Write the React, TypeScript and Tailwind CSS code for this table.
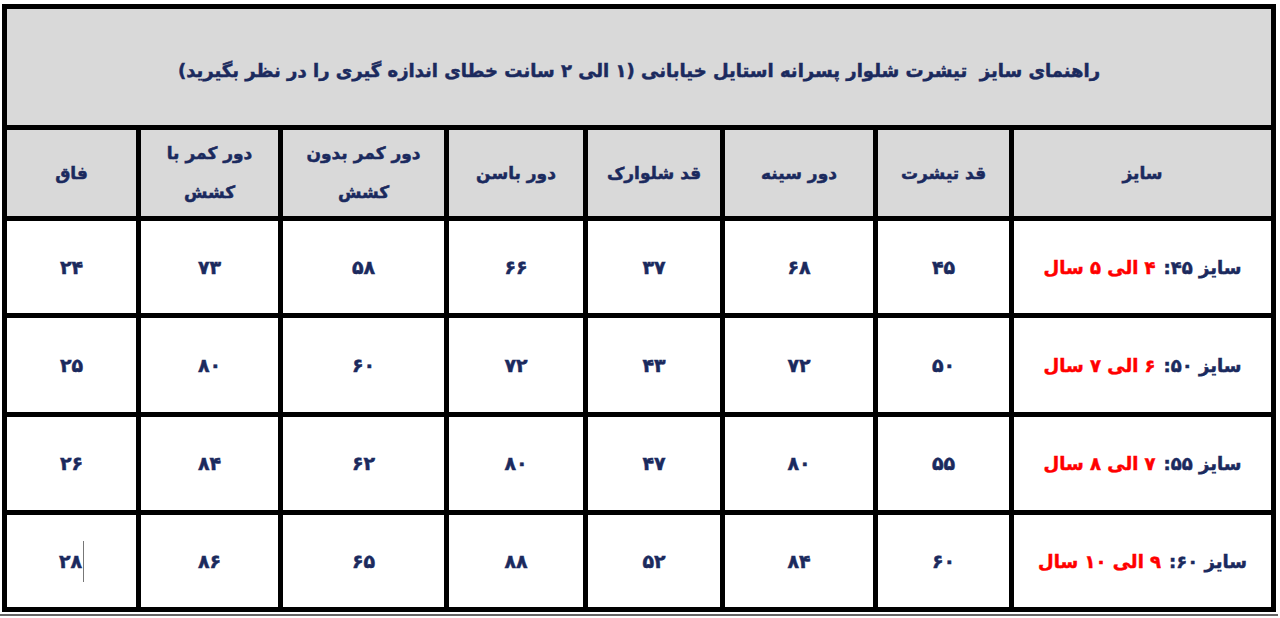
import React from "react";

type Row = {
  size: string;
  age: string;
  values: string[];
};

const headers: string[][] = [
  ["سایز"],
  ["قد تیشرت"],
  ["دور سینه"],
  ["قد شلوارک"],
  ["دور باسن"],
  ["دور کمر بدون", "کشش"],
  ["دور کمر با", "کشش"],
  ["فاق"],
];

const rows: Row[] = [
  { size: "سایز ۴۵:", age: "۴ الی ۵ سال", values: ["۴۵", "۶۸", "۳۷", "۶۶", "۵۸", "۷۳", "۲۴"] },
  { size: "سایز ۵۰:", age: "۶ الی ۷ سال", values: ["۵۰", "۷۲", "۴۳", "۷۲", "۶۰", "۸۰", "۲۵"] },
  { size: "سایز ۵۵:", age: "۷ الی ۸ سال", values: ["۵۵", "۸۰", "۴۷", "۸۰", "۶۲", "۸۴", "۲۶"] },
  { size: "سایز ۶۰:", age: "۹ الی ۱۰ سال", values: ["۶۰", "۸۴", "۵۲", "۸۸", "۶۵", "۸۶", "۲۸"] },
];

export default function App() {
  return (
    <div className="h-[618px] w-[1280px] overflow-hidden bg-white pl-[2px] pt-[4px] font-['DejaVu_Sans',sans-serif] font-bold text-[#1b2a5e] [-webkit-text-stroke:0.5px_#1b2a5e]">
      <div
        dir="rtl"
        className="grid w-[1274px] grid-cols-[257px_131px_148px_132px_134px_161px_137px_129px] grid-rows-[116px_86px_92px_94px_93px_92px] gap-[5px] bg-black p-[5px]"
      >
        <div className="col-span-8 flex items-center justify-center bg-[#d9d9d9] pt-[6px] text-[18px]">
          راهنمای سایز&nbsp; تیشرت شلوار پسرانه استایل خیابانی (۱ الی ۲ سانت خطای اندازه گیری را در نظر بگیرید)
        </div>

        {headers.map((lines, i) => (
          <div
            key={i}
            className="flex flex-col items-center justify-center bg-[#d9d9d9] text-[17px] leading-[39px]"
          >
            {lines.map((l) => (
              <span key={l}>{l}</span>
            ))}
          </div>
        ))}

        {rows.map((row, r) => (
          <React.Fragment key={r}>
            <div className="flex items-center justify-center bg-white text-[18px]">
              <span>{row.size}</span>
              <span className="mr-[8px] text-[#ff0000] [-webkit-text-stroke:0.5px_#ff0000]">{row.age}</span>
            </div>
            {row.values.map((v, c) => (
              <div key={c} className="flex items-center justify-center bg-white text-[19px]">
                {r === 3 && c === 6 && (
                  <span className="ml-[1px] inline-block h-[41px] w-px bg-[#777]" />
                )}
                <span>{v}</span>
              </div>
            ))}
          </React.Fragment>
        ))}
      </div>
      <div className="mt-[2px] h-[2px] w-[1278px] -ml-[2px] bg-[#666]" />
    </div>
  );
}
